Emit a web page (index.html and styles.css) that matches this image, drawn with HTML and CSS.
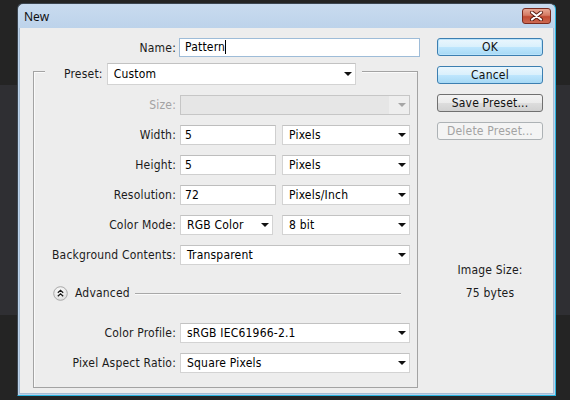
FILE: index.html
```html
<!DOCTYPE html>
<html>
<head>
<meta charset="utf-8">
<link rel="stylesheet" href="styles.css">
</head>
<body>
<div class="win">
  <div class="titlebar">
    <span class="title">New</span>
    <div class="close">
      <svg width="15" height="10" viewBox="0 0 15 10"><path d="M3 1.5 L12 8.5 M12 1.5 L3 8.5" stroke="#5a1c12" stroke-width="4" stroke-linecap="round"/><path d="M3 1.5 L12 8.5 M12 1.5 L3 8.5" stroke="#ffffff" stroke-width="2.2" stroke-linecap="round"/></svg>
    </div>
  </div>
  <div class="client">
    <div class="main">
      <div class="name-row">
        <span class="lbl">Name:</span>
        <div class="field name">Pattern<span class="caret"></span></div>
      </div>
      <div class="group">
        <div class="legend">
          <span class="lbl">Preset:</span>
          <div class="select preset"><span>Custom</span><i class="arrow"></i></div>
        </div>
        <div class="row first">
          <span class="lbl dis">Size:</span>
          <div class="select disabled"><span></span><i class="arrow"></i></div>
        </div>
        <div class="row">
          <span class="lbl">Width:</span>
          <div class="pair">
            <div class="field num">5</div>
            <div class="select unit"><span>Pixels</span><i class="arrow"></i></div>
          </div>
        </div>
        <div class="row">
          <span class="lbl">Height:</span>
          <div class="pair">
            <div class="field num">5</div>
            <div class="select unit"><span>Pixels</span><i class="arrow"></i></div>
          </div>
        </div>
        <div class="row">
          <span class="lbl">Resolution:</span>
          <div class="pair">
            <div class="field num">72</div>
            <div class="select unit"><span>Pixels/Inch</span><i class="arrow"></i></div>
          </div>
        </div>
        <div class="row">
          <span class="lbl">Color Mode:</span>
          <div class="pair mode">
            <div class="select cmode"><span>RGB Color</span><i class="arrow"></i></div>
            <div class="select unit"><span>8 bit</span><i class="arrow"></i></div>
          </div>
        </div>
        <div class="row">
          <span class="lbl">Background Contents:</span>
          <div class="select"><span>Transparent</span><i class="arrow"></i></div>
        </div>
        <div class="adv">
          <span class="adv-icon">
            <svg width="15" height="15" viewBox="0 0 15 15"><defs><radialGradient id="g" cx="0.45" cy="0.35" r="0.7"><stop offset="0" stop-color="#ffffff"/><stop offset="1" stop-color="#dcdcdc"/></radialGradient></defs><circle cx="7.5" cy="7.5" r="6.8" fill="url(#g)" stroke="#a9a9a9" stroke-width="1"/><path d="M4.8 6.8 L7.5 4.3 L10.2 6.8 M4.8 10.3 L7.5 7.8 L10.2 10.3" fill="none" stroke="#1a1a1a" stroke-width="1.3"/></svg>
          </span>
          <span class="adv-text">Advanced</span>
          <span class="adv-line"></span>
        </div>
        <div class="row profile">
          <span class="lbl">Color Profile:</span>
          <div class="select"><span>sRGB IEC61966-2.1</span><i class="arrow"></i></div>
        </div>
        <div class="row">
          <span class="lbl">Pixel Aspect Ratio:</span>
          <div class="select"><span>Square Pixels</span><i class="arrow"></i></div>
        </div>
      </div>
    </div>
    <div class="side">
      <div class="btn default">OK</div>
      <div class="btn hot">Cancel</div>
      <div class="btn">Save Preset...</div>
      <div class="btn off">Delete Preset...</div>
      <div class="size-info">
        <div>Image Size:</div>
        <div class="bytes">75 bytes</div>
      </div>
    </div>
  </div>
</div>
</body>
</html>
```
FILE: styles.css
```css
html, body {
  margin: 0;
  padding: 0;
}
body {
  width: 570px;
  height: 400px;
  overflow: hidden;
  background: linear-gradient(to bottom, #242424 0, #242424 85px, #2f2f33 85px, #2f2f33 315px, #242424 315px);
  font-family: "DejaVu Sans Condensed", "DejaVu Sans", sans-serif;
  font-size: 12px;
  letter-spacing: 0.2px;
  color: #1b1b1b;
}
.win {
  margin: 3px 0 0 17px;
  width: 539px;
  height: 393px;
  box-sizing: border-box;
  border: 1px solid #3c4650;
  border-right-color: #2bb5e0;
  border-bottom-color: #2bb5e0;
  border-radius: 6px 6px 0 0;
  background: linear-gradient(to bottom, #c9dbef 0, #bcd2ea 26px, #bcd2ea 100%);
  display: flex;
  flex-direction: column;
}
.titlebar {
  height: 24px;
  display: flex;
  align-items: flex-start;
  flex: none;
}
.title {
  font-family: "Noto Sans", "Open Sans", sans-serif;
  font-size: 12px;
  letter-spacing: 0;
  color: #111;
  margin: 4px 0 0 6px;
}
.close {
  margin: 4px 4px 0 auto;
  width: 29px;
  height: 16px;
  box-sizing: border-box;
  border: 1px solid #7a2a1e;
  border-radius: 3px;
  background: linear-gradient(to bottom, #e8a895 0, #d57a63 45%, #c04a32 55%, #cd6a52 100%);
  display: flex;
  align-items: center;
  justify-content: center;
}
.close svg { display: block; }
.client {
  flex: 1;
  margin: 0 1px 1px 1px;
  background: #ededed;
  display: flex;
  border: 1px solid #a7bcd3;
  border-top: none;
}
.main {
  width: 400px;
  padding-top: 10px;
}
.name-row {
  display: flex;
  justify-content: flex-end;
  align-items: center;
  height: 19px;
}
.name-row .lbl { margin-right: 3px; }
.field {
  background: #fff;
  border: 1px solid #cfcfcf;
  border-top-color: #bdbdbd;
  box-sizing: border-box;
  height: 20px;
  line-height: 18px;
  padding-left: 4px;
  color: #000;
  white-space: nowrap;
}
.field.name {
  width: 241px;
  height: 19px;
  line-height: 17px;
  border-color: #9ebcd8;
  padding-left: 5px;
}
.caret {
  display: inline-block;
  width: 1px;
  height: 14px;
  background: #000;
  vertical-align: -3px;
}
.group {
  margin: 14px 2px 0 13px;
  border: 1px solid #a3a3a3;
  box-shadow: inset 1px 1px 0 #fafafa;
  padding-bottom: 14px;
}
.legend {
  display: flex;
  align-items: center;
  width: fit-content;
  margin: -9px 0 0 11px;
  padding: 0 6px 0 19px;
  background: #ededed;
}
.legend .lbl { margin-right: 4px; }
.select {
  position: relative;
  background: #fff;
  border: 1px solid #d3d3d3;
  border-top-color: #c2c2c2;
  box-sizing: border-box;
  height: 20px;
  line-height: 18px;
  padding-left: 6px;
  color: #000;
  white-space: nowrap;
  display: flex;
  align-items: center;
}
.select span { flex: 1; }
.arrow {
  width: 0;
  height: 0;
  border-left: 4px solid transparent;
  border-right: 4px solid transparent;
  border-top: 4px solid #111;
  margin-right: 3px;
}
.select.preset {
  width: 249px;
  height: 22px;
  line-height: 20px;
}
.select.disabled {
  background: linear-gradient(to right, #e6e6e6 0, #e6e6e6 calc(100% - 20px), #eeeeee calc(100% - 20px));
  border-color: #c6c6c6;
}
.select.disabled .arrow { border-top-color: #a6a6a6; }
.row {
  display: grid;
  grid-template-columns: 142px 230px;
  column-gap: 4px;
  height: 20px;
  margin-top: 10px;
  align-items: center;
}
.row.first { margin-top: 10px; }
.row .lbl { text-align: right; white-space: nowrap; }
.lbl.dis { color: #a2a2a2; }
.pair {
  display: flex;
  justify-content: space-between;
}
.field.num { width: 96px; }
.select.unit { width: 128px; }
.select.cmode { width: 93px; }
.adv {
  display: flex;
  align-items: center;
  height: 18px;
  margin-top: 19px;
  padding-left: 19px;
  padding-right: 16px;
}
.adv-icon { display: flex; width: 15px; height: 15px; }
.adv-text { margin-left: 7px; color: #1b1b1b; }
.adv-line {
  flex: 1;
  height: 1px;
  background: #a8a8a8;
  margin-left: 5px;
  box-shadow: 0 1px 0 #fafafa;
}
.row.profile { margin-top: 21px; }
.side {
  padding: 10px 0 0 17px;
  width: 106px;
}
.btn {
  width: 106px;
  height: 18px;
  box-sizing: border-box;
  border: 1px solid #707070;
  border-radius: 3px;
  background: linear-gradient(to bottom, #f3f3f3 0, #ebebeb 50%, #dddddd 51%, #d1d1d1 100%);
  text-align: center;
  line-height: 16px;
  color: #111;
  margin-bottom: 10px;
}
.btn.default {
  border-color: #3c7fb1;
  background: linear-gradient(to bottom, #eaf6fd 0, #d9f0fc 50%, #bee6fd 51%, #a7d9f5 100%);
  box-shadow: inset 0 0 0 1px #b9e3fb;
}
.btn.hot {
  border-color: #3c7fb1;
  background: linear-gradient(to bottom, #eaf6fd 0, #d9f0fc 50%, #bee6fd 51%, #a7d9f5 100%);
}
.btn.off {
  border-color: #adb2b5;
  background: #f4f4f4;
  color: #a3a3a3;
}
.size-info {
  margin-top: 119px;
  text-align: center;
  line-height: 23px;
}
```
